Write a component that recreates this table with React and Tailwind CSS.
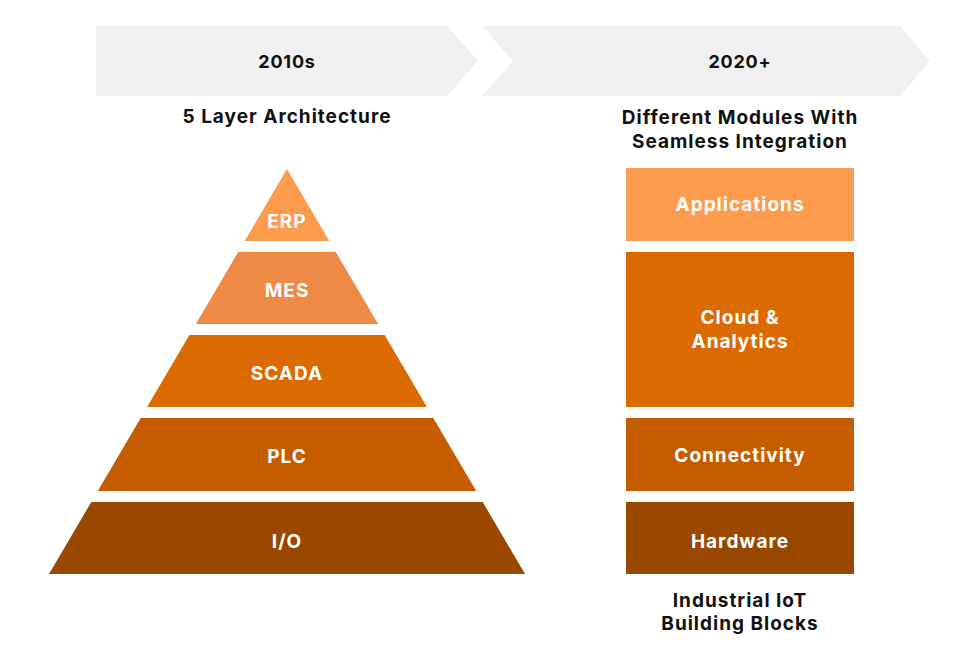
export default function App() {
  return (
    <div className="w-[980px] h-[654px] bg-white text-[#111111] font-['Inter','Noto_Sans',sans-serif]">
      {/* timeline arrows */}
      <div className="flex pt-[26px] pl-[96px] gap-[4px]">
        <div className="w-[382px] h-[70px] bg-[#f0f0f0] [clip-path:polygon(0_0,351px_0,100%_50%,351px_100%,0_100%)] flex items-center justify-center">
          <span className="text-[18px] font-bold tracking-[0.8px]">2010s</span>
        </div>
        <div className="w-[448px] h-[70px] bg-[#f0f0f0] [clip-path:polygon(0_0,418px_0,100%_50%,418px_100%,0_100%,31px_50%)] flex items-center justify-center pl-[68px]">
          <span className="text-[18px] font-bold tracking-[0.8px]">2020+</span>
        </div>
      </div>

      <div className="flex">
        {/* left column */}
        <div className="ml-[49px] w-[476px] flex flex-col items-center">
          <div className="mt-[9px] h-[24px] leading-[24px] text-[19px] font-bold tracking-[1px] whitespace-nowrap">5 Layer Architecture</div>
          <div className="mt-[40px] w-[476px] flex flex-col gap-[11px] text-white text-[19px] font-bold tracking-[1px]">
            <div className="h-[72px] bg-[#fc9a4d] [clip-path:polygon(238px_0,280.3px_100%,195.7px_100%)] flex items-end justify-center pb-[7px]">
              <span className="leading-[24px]">ERP</span>
            </div>
            <div className="h-[72px] bg-[#ee8a45] [clip-path:polygon(189.2px_0,286.8px_0,329.1px_100%,146.9px_100%)] flex items-center justify-center pt-[6px]">
              <span className="leading-[24px]">MES</span>
            </div>
            <div className="h-[72px] bg-[#db6a00] [clip-path:polygon(140.4px_0,335.6px_0,377.9px_100%,98.1px_100%)] flex items-center justify-center pt-[5px]">
              <span className="leading-[24px]">SCADA</span>
            </div>
            <div className="h-[73px] bg-[#c65c00] [clip-path:polygon(91.7px_0,384.3px_0,427.2px_100%,48.8px_100%)] flex items-center justify-center pt-[4px]">
              <span className="leading-[24px]">PLC</span>
            </div>
            <div className="h-[72px] bg-[#9a4700] [clip-path:polygon(42.3px_0,433.7px_0,100%_100%,0_100%)] flex items-center justify-center pt-[8px]">
              <span className="leading-[24px]">I/O</span>
            </div>
          </div>
        </div>

        {/* right column */}
        <div className="ml-[101px] w-[228px] flex flex-col items-center">
          <div className="mt-[10px] text-[19px] leading-[24px] font-bold text-center whitespace-nowrap tracking-[1px]">
            <div>Different Modules With</div>
            <div>Seamless Integration</div>
          </div>
          <div className="mt-[14px] w-[228px] flex flex-col gap-[11px] text-white text-[19px] font-bold tracking-[1px] text-center">
            <div className="h-[73px] bg-[#fd9b4e] flex items-center justify-center">
              <span className="leading-[24px]">Applications</span>
            </div>
            <div className="h-[155px] bg-[#db6a00] flex flex-col items-center justify-center pt-[1px]">
              <span className="leading-[24px]">Cloud &amp;</span>
              <span className="leading-[24px]">Analytics</span>
            </div>
            <div className="h-[73px] bg-[#c65c00] flex items-center justify-center pt-[2px]">
              <span className="leading-[24px] whitespace-nowrap">Connectivity</span>
            </div>
            <div className="h-[72px] bg-[#9a4700] flex items-center justify-center pt-[7px]">
              <span className="leading-[24px]">Hardware</span>
            </div>
          </div>
          <div className="mt-[15px] text-[19px] leading-[23px] font-bold text-center whitespace-nowrap tracking-[1px]">
            <div>Industrial IoT</div>
            <div>Building Blocks</div>
          </div>
        </div>
      </div>
    </div>
  );
}
